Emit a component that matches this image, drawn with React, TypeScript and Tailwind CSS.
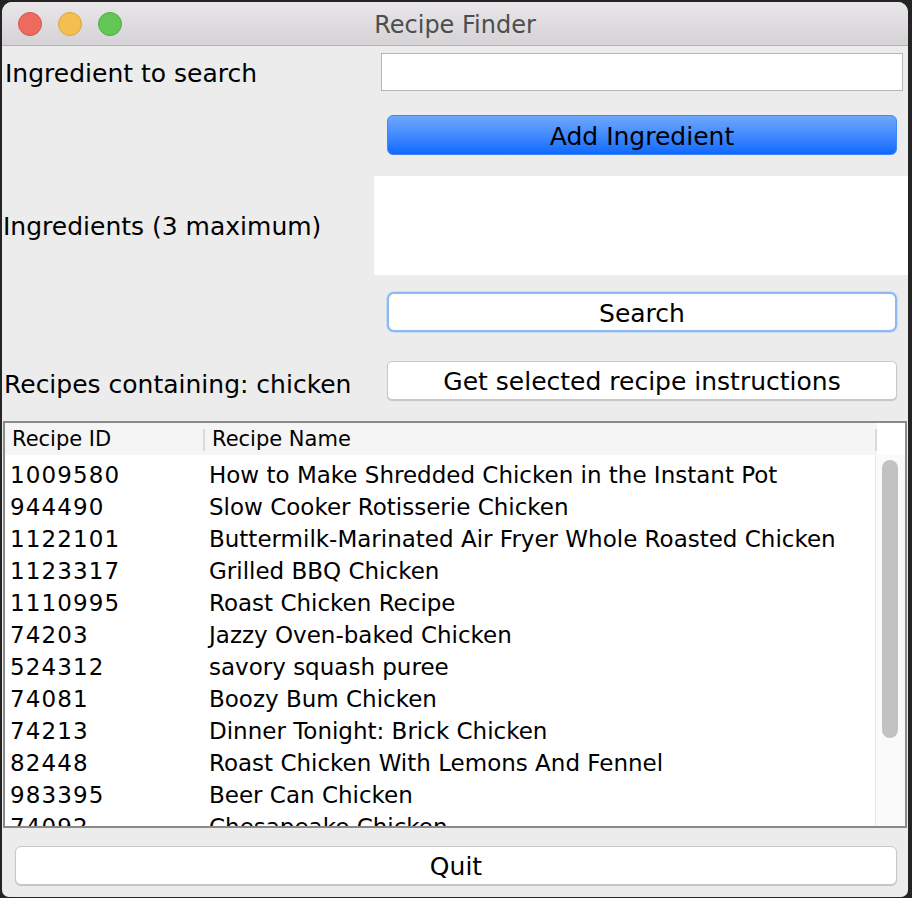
import React from 'react';

const recipes: [string, string][] = [
  ['1009580', 'How to Make Shredded Chicken in the Instant Pot'],
  ['944490', 'Slow Cooker Rotisserie Chicken'],
  ['1122101', 'Buttermilk-Marinated Air Fryer Whole Roasted Chicken'],
  ['1123317', 'Grilled BBQ Chicken'],
  ['1110995', 'Roast Chicken Recipe'],
  ['74203', 'Jazzy Oven-baked Chicken'],
  ['524312', 'savory squash puree'],
  ['74081', 'Boozy Bum Chicken'],
  ['74213', 'Dinner Tonight: Brick Chicken'],
  ['82448', 'Roast Chicken With Lemons And Fennel'],
  ['983395', 'Beer Can Chicken'],
  ['74092', 'Chesapeake Chicken'],
];

function TrafficLights() {
  return (
    <div className="flex items-center gap-[16px] pl-[16px]">
      <span className="block h-[24px] w-[24px] rounded-full border border-[#d4554a] bg-[#ee6a5f]" />
      <span className="block h-[24px] w-[24px] rounded-full border border-[#d9a440] bg-[#f5bf4f]" />
      <span className="block h-[24px] w-[24px] rounded-full border border-[#4fa944] bg-[#62c655]" />
    </div>
  );
}

export default function App() {
  return (
    <div
      className="h-[898px] w-[912px] overflow-hidden bg-[#242424] pl-[2px] pt-[2px] text-[25px] text-black"
      style={{ fontFamily: '"DejaVu Sans", "Liberation Sans", sans-serif' }}
    >
      <div className="flex h-[895px] w-[906px] flex-col overflow-hidden rounded-t-[10px] rounded-b-[7px] bg-[#ececec]">
        {/* title bar */}
        <div className="relative flex h-[44px] shrink-0 items-center border-b border-[#b3b3b3] bg-gradient-to-b from-[#e9e7e9] to-[#d4d2d4]">
          <TrafficLights />
          <div className="absolute inset-0 flex items-center justify-center pt-[3px] text-[24px] text-[#4d4d4d]">
            Recipe Finder
          </div>
        </div>

        {/* ingredient input */}
        <div className="flex h-[52px] items-center">
          <div className="w-[379px] pl-[3px] pt-[3px]">Ingredient to search</div>
          <div className="h-[38px] w-[522px] border border-[#b5b5b5] bg-white" />
        </div>

        <div className="flex h-[78px] items-start">
          <div className="w-[385px]" />
          <button className="mt-[17px] h-[40px] w-[510px] rounded-[6px] border border-[#3f86f7] bg-gradient-to-b from-[#6ca7fb] to-[#0b69fe] pt-[2px] leading-none">
            Add Ingredient
          </button>
        </div>

        {/* ingredients list */}
        <div className="flex h-[99px] items-center">
          <div className="w-[372px] pl-[1px] pt-[3px]">Ingredients (3 maximum)</div>
          <div className="h-full flex-1 bg-white" />
        </div>

        <div className="flex h-[76px] items-start">
          <div className="w-[385px]" />
          <button className="mt-[17px] h-[40px] w-[510px] rounded-[7px] border-2 border-[#8db8f1] bg-white pt-[3px] leading-none shadow-[0_0_0_1px_#c9ddf8]">
            Search
          </button>
        </div>

        <div className="flex h-[70px] items-start">
          <div className="w-[385px] pl-[2px] pt-[15px]">Recipes containing: chicken</div>
          <button className="mt-[10px] h-[39px] w-[510px] rounded-[5px] border border-[#c8c8c8] bg-white pt-[2px] leading-none shadow-[0_1px_1px_rgba(0,0,0,0.18)]">
            Get selected recipe instructions
          </button>
        </div>

        {/* results table */}
        <div className="mx-[1px] flex h-[407px] flex-col border-2 border-[#8a8a8a] bg-white">
          <div className="flex h-[32px] shrink-0">
            <div className="flex w-[872px] items-center bg-[#f5f5f5] pt-[2px] text-[21px]">
              <div className="flex h-full w-[200px] items-center pl-[7px]">
                <span>Recipe ID</span>
                <span className="ml-auto h-[22px] w-[2px] bg-[#dadada]" />
              </div>
              <div className="flex h-full flex-1 items-center pl-[7px]">
                <span>Recipe Name</span>
                <span className="ml-auto h-[22px] w-[2px] bg-[#dadada]" />
              </div>
            </div>
            <div className="flex-1 bg-white" />
          </div>
          <div className="flex min-h-0 flex-1">
            <div className="flex-1 overflow-hidden pt-[4px] text-[23px]">
              {recipes.map(([id, name]) => (
                <div key={id} className="flex h-[32px] items-center whitespace-nowrap">
                  <div className="w-[202px] pl-[5px] tracking-[1.1px]">{id}</div>
                  <div className="pl-[2px]">{name}</div>
                </div>
              ))}
            </div>
            <div className="w-[30px] border-l border-[#e6e6e6] bg-[#fafafa] pl-[6px] pt-[5px]">
              <div className="h-[278px] w-[16px] rounded-full bg-[#c2c2c2]" />
            </div>
          </div>
        </div>

        {/* quit */}
        <div className="flex flex-1 items-start pl-[13px]">
          <button className="mt-[18px] h-[39px] w-[882px] rounded-[6px] border border-[#c8c8c8] bg-white pt-[2px] leading-none shadow-[0_1px_1px_rgba(0,0,0,0.18)]">
            Quit
          </button>
        </div>
      </div>
    </div>
  );
}
